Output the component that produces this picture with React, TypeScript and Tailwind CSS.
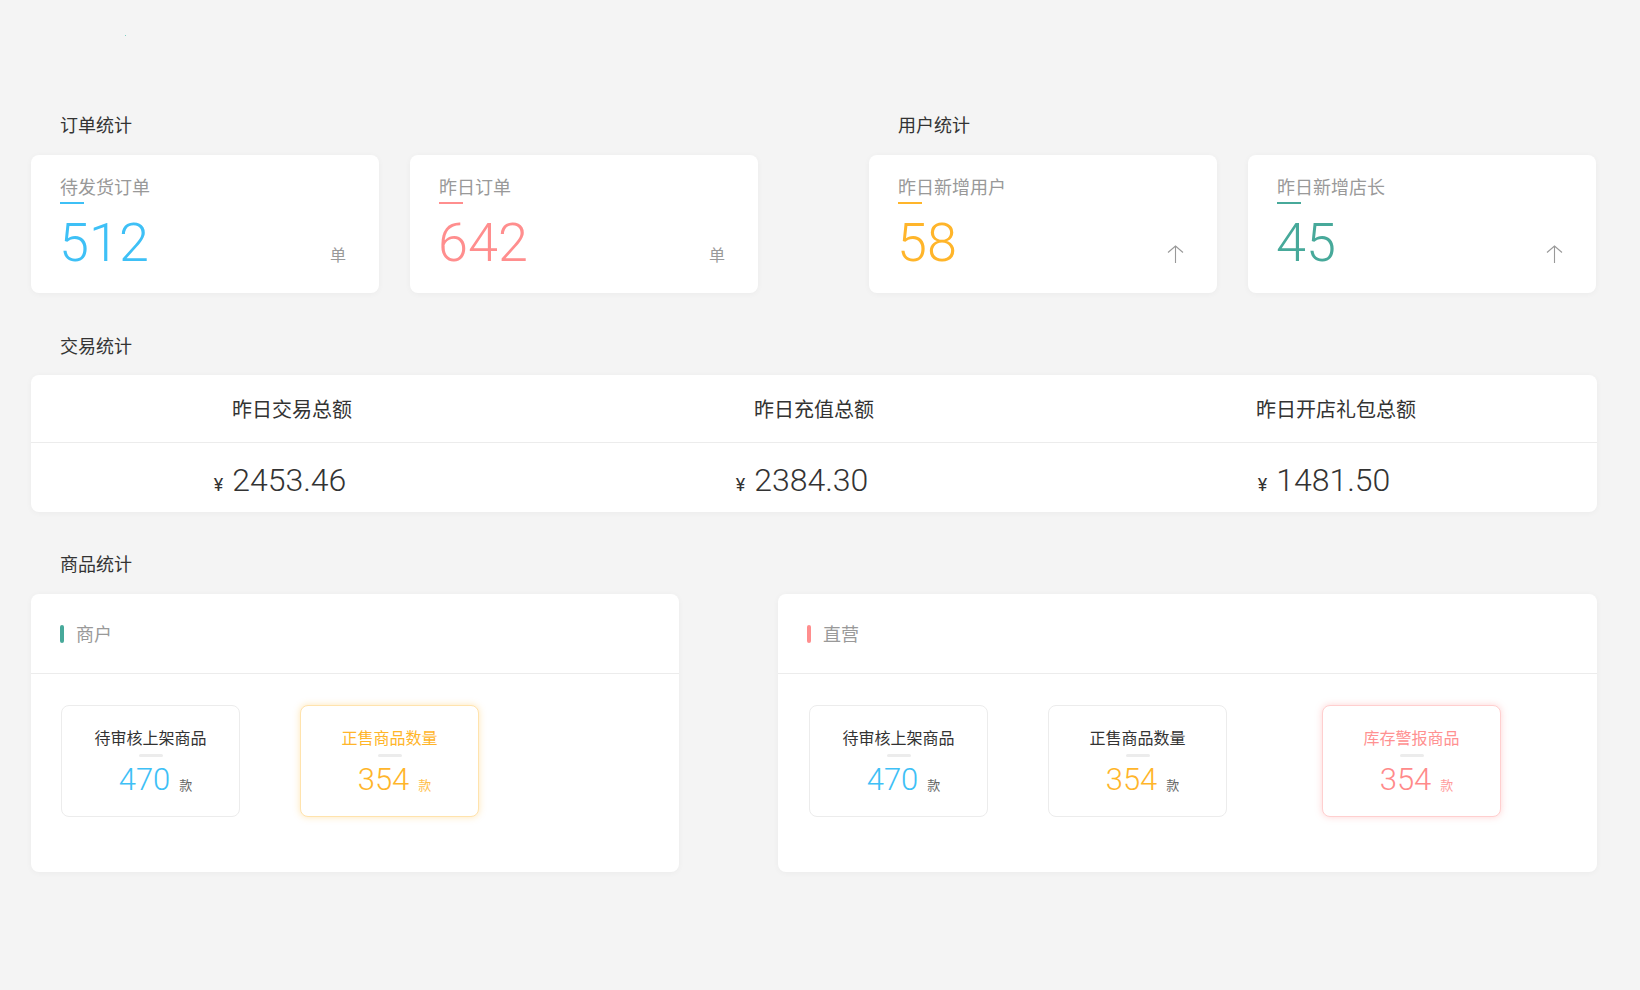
import React from 'react';

const cjk = { fontFamily: '"Noto Sans CJK SC", "Noto Sans", sans-serif' };
const num = { fontFamily: 'Roboto, "Liberation Sans", sans-serif' };

const ArrowUp: React.FC = () => (
  <svg width="17" height="18" viewBox="0 0 17 18" fill="none" stroke="#999" strokeWidth="1.1" className="translate-y-[2px]">
    <polyline points="1,7.5 8.5,1 16,7.5" />
    <line x1="8.5" y1="1" x2="8.5" y2="18" />
  </svg>
);

interface StatCardProps {
  label: string;
  value: string;
  color: string;
  unit?: string;
}

const StatCard: React.FC<StatCardProps> = ({ label, value, color, unit }) => (
  <div className="w-[348px] h-[138px] bg-white rounded-lg shadow-[0_1px_6px_rgba(0,0,0,0.04)] pl-[29px] pr-[33px] pt-[19px]">
    <div className="text-[18px] leading-[24px] text-[#999]" style={cjk}>{label}</div>
    <div className="mt-[4px] w-[24px] h-[2px]" style={{ backgroundColor: color }} />
    <div className="mt-[12px] flex items-baseline justify-between">
      <span className="text-[54px] leading-[54px] font-light -ml-[1px]" style={{ ...num, color }}>{value}</span>
      {unit ? (
        <span className="text-[16px] leading-none text-[#999]" style={cjk}>{unit}</span>
      ) : (
        <ArrowUp />
      )}
    </div>
  </div>
);

const SectionTitle: React.FC<{ children: React.ReactNode }> = ({ children }) => (
  <div className="pl-[29px] text-[18px] leading-[24px] text-[#333]" style={cjk}>{children}</div>
);

interface GoodsBoxProps {
  title: string;
  value: string;
  color: string;
  variant?: 'plain' | 'orange' | 'pink';
  className?: string;
}

const GoodsBox: React.FC<GoodsBoxProps> = ({ title, value, color, variant = 'plain', className = '' }) => {
  const frame =
    variant === 'orange'
      ? 'border-[#ffe3ad] shadow-[0_0_7px_rgba(255,181,42,0.35)]'
      : variant === 'pink'
      ? 'border-[#ffcfcf] shadow-[0_0_7px_rgba(255,130,130,0.35)]'
      : 'border-[#ececec]';
  const titleColor = variant === 'orange' ? '#ffb52a' : variant === 'pink' ? '#ff9191' : '#333';
  const unitColor = variant === 'orange' ? '#ffbf4d' : variant === 'pink' ? '#ff9d9d' : '#666';
  return (
    <div className={`w-[179px] h-[112px] rounded-lg border bg-white flex flex-col items-center pt-[20px] ${frame} ${className}`}>
      <div className="text-[16px] leading-[22px]" style={{ ...cjk, color: titleColor }}>{title}</div>
      <div className="mt-[6px] w-[24px] h-[3px] rounded-full bg-[#ececec]" />
      <div className="mt-[7px] flex items-baseline pl-[10px]">
        <span className="text-[31px] leading-[31px] font-light" style={{ ...num, color }}>{value}</span>
        <span className="ml-[9px] text-[13px] leading-none" style={{ ...cjk, color: unitColor }}>款</span>
      </div>
    </div>
  );
};

const TradeCol: React.FC<{ label: string; value: string }> = ({ label, value }) => (
  <div className="flex-1 flex flex-col">
    <div className="h-[68px] flex items-center justify-center border-b border-[#ececec] text-[20px] text-[#333]" style={cjk}>
      {label}
    </div>
    <div className="h-[69px] flex items-center justify-center pr-[24px] pt-[4px]">
      <div className="flex items-baseline text-[#333]" style={num}>
        <span className="text-[18px] leading-none">¥</span>
        <span className="ml-[9px] text-[32px] leading-none font-light">{value}</span>
      </div>
    </div>
  </div>
);

const App: React.FC = () => {
  return (
    <div className="min-h-[990px] w-full bg-[#f4f4f4] pl-[31px] pr-[43px]">
      <div className="h-[112px] pt-[35px] pl-[94px]">
        <div className="w-[1px] h-[1px] bg-[#7fd0c4]" />
      </div>

      {/* orders + users */}
      <div className="flex gap-[111px]">
        <div className="w-[727px]">
          <SectionTitle>订单统计</SectionTitle>
          <div className="mt-[19px] flex gap-[31px]">
            <StatCard label="待发货订单" value="512" color="#3ec0f6" unit="单" />
            <StatCard label="昨日订单" value="642" color="#ff8e8e" unit="单" />
          </div>
        </div>
        <div className="w-[727px]">
          <SectionTitle>用户统计</SectionTitle>
          <div className="mt-[19px] flex gap-[31px]">
            <StatCard label="昨日新增用户" value="58" color="#ffb52a" />
            <StatCard label="昨日新增店长" value="45" color="#47a99a" />
          </div>
        </div>
      </div>

      {/* trade */}
      <div className="mt-[40px]">
        <SectionTitle>交易统计</SectionTitle>
        <div className="mt-[18px] bg-white rounded-lg shadow-[0_1px_6px_rgba(0,0,0,0.04)] flex overflow-hidden">
          <TradeCol label="昨日交易总额" value="2453.46" />
          <TradeCol label="昨日充值总额" value="2384.30" />
          <TradeCol label="昨日开店礼包总额" value="1481.50" />
        </div>
      </div>

      {/* goods */}
      <div className="mt-[39px]">
        <SectionTitle>商品统计</SectionTitle>
        <div className="mt-[19px] flex gap-[99px]">
          <div className="w-[648px] h-[278px] bg-white rounded-lg shadow-[0_1px_6px_rgba(0,0,0,0.04)]">
            <div className="h-[80px] flex items-center pl-[29px] border-b border-[#ececec]">
              <div className="w-[4px] h-[18px] rounded-full bg-[#47a99a]" />
              <span className="ml-[12px] text-[18px] text-[#999]" style={cjk}>商户</span>
            </div>
            <div className="flex pl-[30px] pt-[31px]">
              <GoodsBox title="待审核上架商品" value="470" color="#3ec0f6" />
              <GoodsBox title="正售商品数量" value="354" color="#ffb52a" variant="orange" className="ml-[60px]" />
            </div>
          </div>
          <div className="flex-1 h-[278px] bg-white rounded-lg shadow-[0_1px_6px_rgba(0,0,0,0.04)]">
            <div className="h-[80px] flex items-center pl-[29px] border-b border-[#ececec]">
              <div className="w-[4px] h-[18px] rounded-full bg-[#ff8e8e]" />
              <span className="ml-[12px] text-[18px] text-[#999]" style={cjk}>直营</span>
            </div>
            <div className="flex pl-[31px] pt-[31px]">
              <GoodsBox title="待审核上架商品" value="470" color="#3ec0f6" />
              <GoodsBox title="正售商品数量" value="354" color="#ffb52a" className="ml-[60px]" />
              <GoodsBox title="库存警报商品" value="354" color="#ff8a8a" variant="pink" className="ml-[95px]" />
            </div>
          </div>
        </div>
      </div>
    </div>
  );
};

export default App;
